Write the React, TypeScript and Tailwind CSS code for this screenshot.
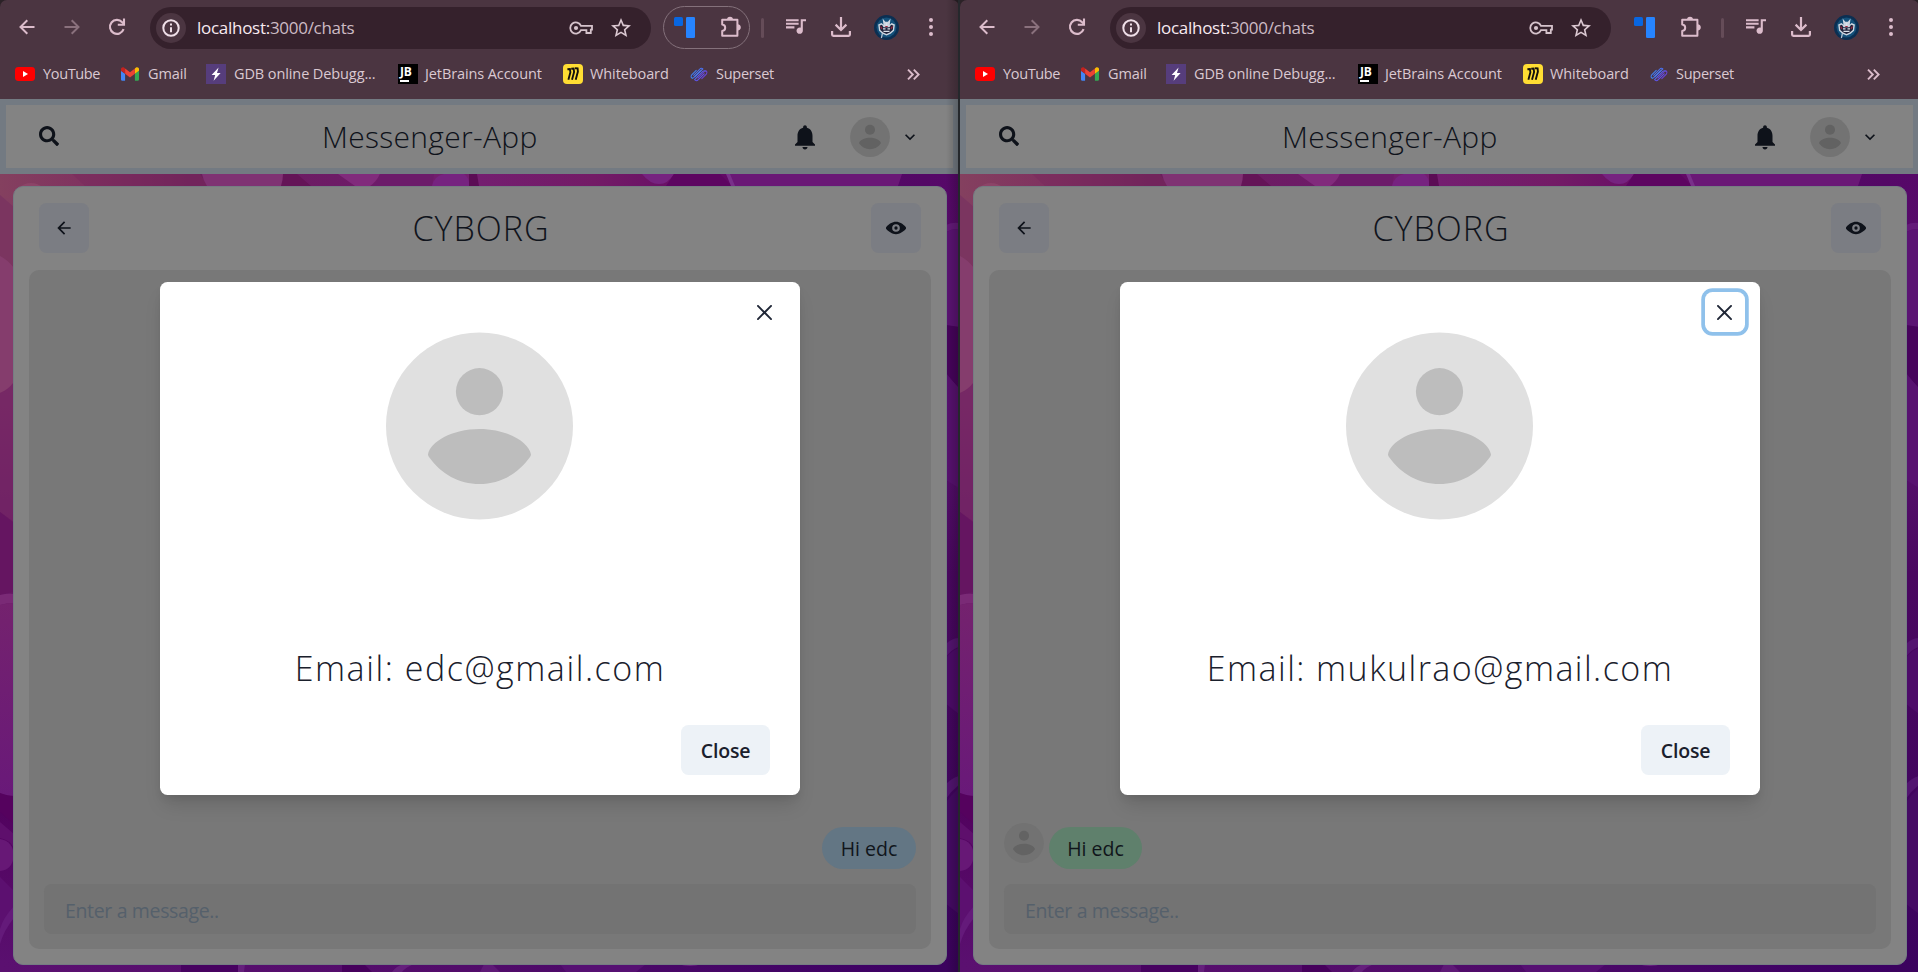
import type { ReactNode } from 'react'

const uiFont = 'font-["Open_Sans","Noto_Sans",sans-serif]'

/* ---------- Browser chrome icons ---------- */

function BackIcon({ className }: { className: string }) {
  return (
    <svg viewBox="0 0 16 16" className={className} fill="none" stroke="currentColor" strokeWidth="2">
      <path d="M15.5 8H2M8.3 1.2 1.5 8l6.8 6.8" />
    </svg>
  )
}

function ReloadIcon() {
  return (
    <svg viewBox="0 0 18 18" className="size-[18px] text-[#dcbccb]" fill="none" stroke="currentColor" strokeWidth="2.1">
      <path d="M15.6 11.2A7 7 0 1 1 14.2 4.2L16 6" />
      <path d="M16 .6v6.2H9.8" />
    </svg>
  )
}

function InfoIcon() {
  return (
    <svg viewBox="0 0 18 18" className="size-[18px] text-[#efdfe8]" fill="none" stroke="currentColor" strokeWidth="2">
      <circle cx="9" cy="9" r="7.7" />
      <path d="M9 8.2v5M9 4.6v2" />
    </svg>
  )
}

function KeyIcon() {
  return (
    <svg viewBox="0 0 24 14" className="h-[14px] w-6 text-[#d6c3cc]" fill="none" stroke="currentColor" strokeWidth="1.8">
      <path d="M12 4.800H23v3.800h-1.200v3.400h-4.400V9.200H12A5.600 5.600 0 1 1 12 4.800z" />
      <circle cx="7" cy="7" r="2.100" fill="currentColor" stroke="none" />
    </svg>
  )
}

function StarIcon() {
  return (
    <svg viewBox="2 2 20 19" className="h-[19px] w-5 text-[#dcc9d2]" fill="currentColor">
      <path d="m22 9.24-7.19-.62L12 2 9.19 8.63 2 9.24l5.46 4.73L5.82 21 12 17.27 18.18 21l-1.63-7.03L22 9.24zM12 15.4l-3.76 2.27 1-4.28-3.32-2.88 4.38-.38L12 6.1l1.71 4.04 4.38.38-3.32 2.88 1 4.28L12 15.4z" />
    </svg>
  )
}

function TabsIcon() {
  return (
    <svg viewBox="0 0 21 21" className="size-[21px]">
      <rect width="9" height="9" rx="1.5" fill="#0866e0" />
      <rect x="12" width="9" height="21" rx="1.2" fill="#2684ff" />
    </svg>
  )
}

function PuzzleIcon() {
  return (
    <svg viewBox="0 0 22 22" className="size-[22px] text-[#dcbccb]" fill="none" stroke="currentColor" strokeWidth="2" strokeLinejoin="round">
      <path d="M2.2 3.8H17.4V19.8H2.2V15c4-.4 4-6 0-6.400z" />
      <path d="M7 3.8h6A3 3 0 0 0 10 .8a3 3 0 0 0-3 3zM17.400 8.400v6A3 3 0 0 0 20.800 11.400a3 3 0 0 0-3.400-3z" fill="currentColor" stroke="none" />
    </svg>
  )
}

function QueueIcon() {
  return (
    <svg viewBox="3 6 19 14" className="h-[15px] w-5 text-[#dcbccb]" fill="currentColor">
      <path d="M15 6H3v2h12V6zm0 3.4H3v2h12v-2zM3 14.8h8v-2H3v2zM17 6v8.18c-.31-.11-.65-.18-1-.18-1.66 0-3 1.34-3 3s1.34 3 3 3 3-1.34 3-3V8h3V6h-5z" />
    </svg>
  )
}

function DownloadIcon() {
  return (
    <svg viewBox="0 0 20 20" className="size-5 text-[#dcbccb]" fill="none" stroke="currentColor" strokeWidth="2.2">
      <path d="M10 0v12.6M4.6 7.6 10 13l5.4-5.4M1.1 14v3.6q0 1.2 1.2 1.2h15.4q1.2 0 1.2-1.2V14" />
    </svg>
  )
}

function ProfileIcon() {
  return (
    <svg viewBox="0 0 25 25" className="size-[25px]">
      <circle cx="12.5" cy="12.5" r="12.5" fill="#0b2f52" />
      <circle cx="12.5" cy="12.5" r="10" fill="#135079" />
      <path d="M4.200 9.500 7.500 8l2 1.800L8.600 3.600l2.700 3.200h2.600l2.700-3.200-.9 6.200L17.600 8l3.300 1.500-.8 6.300-3.500 3-4.100 1.700-4.100-1.700-3.400-3z" fill="#cdd6e0" />
      <path d="M5.700 10.500 8 9.700l1.500 2.600h6l1.500-2.600 2.300.8-.5 4.600-3 2.500-3.300 1.300-3.300-1.300-2.900-2.500z" fill="#20243c" />
      <path d="M9 13.800h2.500M13.500 13.800H16M9.500 16.300h6M12.500 8v3.500" stroke="#dbe2ea" strokeWidth="1.2" fill="none" />
      <path d="M6.600 11.500 8 13.800M18.400 11.500 17 13.800M11.300 11.500h2.400" stroke="#a7263c" strokeWidth="1.2" />
      <path d="M8.500 18 7.400 23" stroke="#b9c6d3" strokeWidth="1.200" />
    </svg>
  )
}

function DotsIcon() {
  return (
    <svg viewBox="0 0 4 18" className="h-[18px] w-1 text-[#dcbccb]" fill="currentColor">
      <circle cx="2" cy="2" r="2" />
      <circle cx="2" cy="9" r="2" />
      <circle cx="2" cy="16" r="2" />
    </svg>
  )
}

/* ---------- Bookmark logos ---------- */

function YouTubeLogo() {
  return (
    <svg viewBox="0 0 20 14" className="h-[14px] w-5">
      <rect width="20" height="14" rx="3.4" fill="#f00" />
      <path d="M8 4v6l5-3z" fill="#fff" />
    </svg>
  )
}

function GmailLogo() {
  return (
    <svg viewBox="52 42 88 66" className="h-[14px] w-[18px]">
      <path fill="#4285f4" d="M58 108h14V74L52 59v43c0 3.32 2.69 6 6 6" />
      <path fill="#34a853" d="M120 108h14c3.32 0 6-2.69 6-6V59l-20 15" />
      <path fill="#fbbc04" d="M120 48v26l20-15v-8c0-7.42-8.47-11.65-14.4-7.2" />
      <path fill="#ea4335" d="M72 74V48l24 18 24-18v26L96 92" />
      <path fill="#c5221f" d="M52 51v8l20 15V48l-5.6-4.2c-5.94-4.45-14.4-.22-14.4 7.2" />
    </svg>
  )
}

function GdbLogo() {
  return (
    <svg viewBox="0 0 20 20" className="size-5">
      <rect width="20" height="20" fill="#563d7c" />
      <path d="M12.6 3.4 5.6 11h3.6l-1.6 5.8 7-7.8H11z" fill="#fff" />
    </svg>
  )
}

function JetBrainsLogo() {
  return (
    <span className="flex size-5 flex-col bg-black pl-[2px] text-white">
      <span className="mt-[1px] font-['Open_Sans',sans-serif] text-[12px] leading-[13px] font-bold">JB</span>
      <span className="mt-[2px] h-[1.5px] w-[9px] bg-white" />
    </span>
  )
}

function MiroLogo() {
  return (
    <svg viewBox="0 0 20 20" className="size-5">
      <rect width="20" height="20" rx="4" fill="#ffdd33" />
      <path d="M4.400 5.200 6.900 5 7.400 8.200 5.400 15.800M8.200 4.800 10.600 4.600 11.100 8 9 15.800M12 4.200 14.600 4.400 14.900 7.600 12.700 15.800" stroke="#12100c" strokeWidth="1.900" fill="none" />
    </svg>
  )
}

function SupersetLogo() {
  return (
    <svg viewBox="0 0 18 15" className="h-[15px] w-[18px]" fill="none" strokeWidth="1.050" strokeLinecap="round">
      <path d="M6.200 3.400 1.700 7.900Q.2 10 2.300 11.300L3.700 10.600 10.400 3.900" stroke="#3f7ff0" />
      <path d="M3.600 8.300 9.600 2.300Q11.400.4 12.800 1.900L4.900 9.800" stroke="#4a72f0" />
      <path d="M4.600 12.700 12.600 4.700Q14.600 3 15.800 4.200" stroke="#5763ee" />
      <path d="M14.200 6.800 8.300 12.700Q6.600 14.400 5.300 13.200" stroke="#5f55ea" />
      <path d="M11.800 11.600 16.300 7.100Q17.800 5 15.700 3.700M8 11 14.500 4.500" stroke="#6a45dd" />
    </svg>
  )
}

/* ---------- App icons ---------- */

function Person({ className, back, front }: { className: string; back: string; front: string }) {
  return (
    <svg viewBox="0 0 187 188" className={className}>
      <circle cx="93.5" cy="94" r="93.5" fill={back} />
      <circle cx="93.5" cy="59.7" r="23.6" fill={front} />
      <path d="M42 122.500C44 110 66 97 93.500 97S143 110 145 122.500Q145 123.600 144 125C132 142 114 152 93.500 152S55 142 43 125Q42 123.600 42 122.500Z" fill={front} />
    </svg>
  )
}

function CloseCross() {
  return (
    <svg viewBox="0 0 24 24" className="size-[15px] text-[#1f2636]" fill="currentColor">
      <path d="M.439,21.44a1.5,1.5,0,0,0,2.122,2.121L11.823,14.3a.25.25,0,0,1,.354,0l9.262,9.263a1.5,1.5,0,1,0,2.122-2.121L14.3,12.177a.25.25,0,0,1,0-.354l9.263-9.262A1.5,1.5,0,0,0,21.439.44L12.177,9.7a.25.25,0,0,1-.354,0L2.561.44A1.5,1.5,0,0,0,.439,2.561L9.7,11.823a.25.25,0,0,1,0,.354Z" />
    </svg>
  )
}

/* Painted wallpaper of overlapping bubbles and diagonal shades */
function Wallpaper() {
  return (
    <svg viewBox="0 0 959 798" className="absolute inset-0 h-[798px] w-[959px]" preserveAspectRatio="none">
      <defs>
        <linearGradient id="wall-left" x1="0" y1="0" x2="0" y2="1">
          <stop offset="0" stopColor="#84405f" />
          <stop offset=".12" stopColor="#803866" />
          <stop offset=".3" stopColor="#75275f" />
          <stop offset=".48" stopColor="#661862" />
          <stop offset=".6" stopColor="#6c1c6e" />
          <stop offset=".77" stopColor="#671775" />
          <stop offset=".8" stopColor="#52035f" />
          <stop offset="1" stopColor="#5a1070" />
        </linearGradient>
        <linearGradient id="wall-blob" x1="0" y1="0" x2="0" y2="1">
          <stop offset="0" stopColor="#74226e" />
          <stop offset="1" stopColor="#691979" />
        </linearGradient>
        <linearGradient id="wall-top" x1="0" y1="0" x2="1" y2="0">
          <stop offset="0" stopColor="#84405f" />
          <stop offset=".1" stopColor="#7f3060" />
          <stop offset=".2" stopColor="#6c1e5c" />
          <stop offset=".35" stopColor="#6d1b66" />
          <stop offset=".5" stopColor="#741e70" />
          <stop offset=".62" stopColor="#731b66" />
          <stop offset=".75" stopColor="#630a66" />
          <stop offset=".93" stopColor="#540866" />
          <stop offset="1" stopColor="#520864" />
        </linearGradient>
        <linearGradient id="wall-right" x1="0" y1="0" x2="0" y2="1">
          <stop offset="0" stopColor="#560868" />
          <stop offset=".3" stopColor="#5a1270" />
          <stop offset=".5" stopColor="#4a0760" />
          <stop offset="1" stopColor="#3b025e" />
        </linearGradient>
        <linearGradient id="wall-bottom" x1="0" y1="0" x2="1" y2="0">
          <stop offset="0" stopColor="#5b1070" />
          <stop offset=".5" stopColor="#520c6a" />
          <stop offset="1" stopColor="#3c0063" />
        </linearGradient>
      </defs>
      <rect width="959" height="798" fill="url(#wall-left)" />
      <rect width="959" height="24" fill="url(#wall-top)" />
      <rect x="930" width="29" height="798" fill="url(#wall-right)" />
      <rect y="786" width="930" height="12" fill="url(#wall-bottom)" />

      {/* top edge */}
      <circle cx="31" cy="26" r="17" fill="#8c4468" />
      <path d="M72 0h128l8 12H85z" fill="#782a5c" opacity=".5" />
      <path d="M202 0h81v12h-76q-4-6-5-12z" fill="#7f3273" />
      <path d="M283 0h14l14 12h-30q2-6 2-12z" fill="#641457" />
      <path d="M338 0h42q-4 8-10 12h-15z" fill="#812b7c" />
      <path d="M380 0h54l-2 12h-60q6-4 8-12z" fill="#6c1b6a" />
      <path d="M432 12q2-10 12-12h20q6 4 5 12z" fill="#762380" />
      <path d="M469 0h8l2 12h-10z" fill="#5b0c55" />
      <path d="M642 0h32q-6 10-15 10T642 0z" fill="#762380" />
      <path d="M674 0h46l12 12h-66z" fill="#5d0561" />
      <path d="M728 0h174l-4 12H733z" fill="#6a1876" />
      <path d="M726 0h4l5 12h-4z" fill="#79308a" />

      {/* left edge */}
      <path d="M0 21 14 33v61L0 82z" fill="#7b3560" />
      <path d="M0 82q8 4 14 12v114Q8 216 0 219z" fill="#853d6d" />
      <path d="M0 219q8-3 14-11v140L0 338z" fill="#77286a" opacity=".55" />
      <path d="M0 338 14 349v69q-8 1-14 3z" fill="#651561" />
      <path d="M0 421q8-2 14-1v9q-8 0-14 2z" fill="#7a2a76" />
      <path d="M0 431q8-2 14-2v193q-8 0-14-3z" fill="url(#wall-blob)" />
      <path d="M0 619q8 3 14 3v28L0 638z" fill="#55025e" />
      <path d="M0 648 14 660v14q-4-8-14-10z" fill="#5e0f6c" />
      <path d="M0 665q13 2 14 17-2 14-14 15z" fill="#671876" />
      <path d="M0 703 14 717v20q-8 8-14 30z" fill="#5c1070" />
      <path d="M14 732Q3 744 0 755v15q4-14 14-26z" fill="#641a7a" />

      {/* right edge */}
      <path d="M946 51q6-3 13-2v6q-7 0-13 3z" fill="#641a79" />
      <path d="M946 58q6-3 13-3v98q-8 0-13-2z" fill="#5b1373" />
      <path d="M946 151l13 2v62l-13-16z" fill="#47035c" />
      <path d="M946 200l13 14v100l-13-8z" fill="#581170" />
      <path d="M946 470q6-6 13-6v9q-7 2-13 10z" fill="#541470" />
      <path d="M946 484q6-8 13-10v66l-13-10z" fill="#4d0b69" />
      <path d="M946 610q6-6 13-8v9q-8 6-13 14z" fill="#521470" />
      <path d="M946 628q6-8 13-14v126l-13-10z" fill="#450a64" />

      {/* bottom edge */}
      <path d="M181 790h57l4 8h-61z" fill="#470260" />
      <path d="M238 790h7l-1 8h-6z" fill="#65207c" />
      <path d="M342 790h22l8 8h-30z" fill="#46005c" />
      <path d="M404 790h10q-8 3-12 8h-10q4-6 12-8z" fill="#65207c" />
      <path d="M484 790h8l8 8h-20z" fill="#5e1976" />
      <path d="M560 790h86l-10 8h-70z" fill="#561072" />
      <path d="M678 790h24q-12 4-24 0z" fill="#6a2280" />
    </svg>
  )
}

/* ---------- Browser window ---------- */

function Slot({ className, children }: { className: string; children: ReactNode }) {
  return <div className={`flex h-[42px] shrink-0 items-center justify-center pb-px ${className}`}>{children}</div>
}

function Bookmark({ logo, label, className }: { logo: ReactNode; label: string; className: string }) {
  return (
    <div className={`flex shrink-0 items-center ${className}`}>
      {logo}
      <span className="-mt-px whitespace-nowrap">{label}</span>
    </div>
  )
}

function BrowserBar({ outlined }: { outlined: boolean }) {
  return (
    <div className="h-[99px] rounded-t-[7px] bg-[#4b3541]">
      <div className="flex items-center pt-[6px] pl-[4.5px]">
        <Slot className="w-[45px]"><BackIcon className="size-4 text-[#dcbccb]" /></Slot>
        <Slot className="w-[45px]"><BackIcon className="size-4 rotate-180 text-[#8a717d]" /></Slot>
        <Slot className="w-[45px]"><ReloadIcon /></Slot>
        <div className="ml-[10.5px] flex h-[42px] w-[501px] shrink-0 items-center rounded-full bg-[#35212c] pl-[6px]">
          <div className="flex size-[30px] items-center justify-center rounded-full bg-[#4b3541]"><InfoIcon /></div>
          <div className="ml-[11px] text-[17px] leading-6 tracking-[-0.28px] text-[#cdbbc4]">
            <span className="text-[#f8eaf1]">localhost:</span>3000/chats
          </div>
          <div className="mt-px ml-auto"><KeyIcon /></div>
          <div className="mr-[20px] ml-[18px]"><StarIcon /></div>
        </div>
        <div className={`ml-3 flex h-[43px] w-[87px] shrink-0 items-center rounded-full border ${outlined ? 'border-[#84717b]' : 'border-transparent'}`}>
          <div className="ml-[10px]"><TabsIcon /></div>
          <div className="-mt-0.5 ml-[25px]"><PuzzleIcon /></div>
        </div>
        <div className="ml-[11px] h-5 w-[3px] rounded-full bg-[#654c58]" />
        <Slot className="ml-[9.5px] w-[45px]"><span className="-mt-px"><QueueIcon /></span></Slot>
        <Slot className="w-[45px]"><DownloadIcon /></Slot>
        <Slot className="w-[45px]"><ProfileIcon /></Slot>
        <Slot className="w-[44px]"><DotsIcon /></Slot>
      </div>
      <div className="mt-[15px] flex h-5 items-center pl-[15px] text-[14.5px] leading-5 tracking-[-0.1px] text-[#dac9d2]">
        <Bookmark className="w-[106px] gap-2 tracking-[-0.35px]" logo={<YouTubeLogo />} label="YouTube" />
        <Bookmark className="w-[85px] gap-[9px]" logo={<GmailLogo />} label="Gmail" />
        <Bookmark className="w-[192px] gap-2" logo={<GdbLogo />} label="GDB online Debugg..." />
        <Bookmark className="w-[165px] gap-[7px]" logo={<JetBrainsLogo />} label="JetBrains Account" />
        <Bookmark className="w-[127px] gap-[7px]" logo={<MiroLogo />} label="Whiteboard" />
        <Bookmark className="w-[217px] gap-2 tracking-[-0.25px]" logo={<SupersetLogo />} label="Superset" />
        <svg viewBox="0 0 13 11" className="h-[11px] w-[13px] text-[#dcbccb]" fill="none" stroke="currentColor" strokeWidth="1.9">
          <path d="m1 .7 4.800 4.800L1 10.300M6.800.7l4.800 4.800-4.800 4.800" />
        </svg>
      </div>
    </div>
  )
}

function AppHeader() {
  return (
    <header className="flex h-[75px] items-center border-6 border-[#737a82] bg-[#838383] text-[#0e121a]">
      <svg viewBox="0 0 512 512" className="-mt-[2px] ml-[33px] size-5 shrink-0" fill="currentColor">
        <path d="M505 442.700L405.300 343c-4.500-4.500-10.600-7-17-7H372c27.600-35.300 44-79.700 44-128C416 93.100 322.900 0 208 0S0 93.100 0 208s93.100 208 208 208c48.300 0 92.700-16.400 128-44v16.300c0 6.400 2.500 12.500 7 17l99.700 99.700c9.400 9.400 24.600 9.400 33.900 0l28.300-28.300c9.400-9.400 9.400-24.600.1-34zM208 336c-70.700 0-128-57.200-128-128 0-70.700 57.200-128 128-128 70.700 0 128 57.200 128 128 0 70.700-57.200 128-128 128z" />
      </svg>
      <h1 className="ml-[263px] w-[428px] shrink-0 text-[30px] leading-[45px] font-light tracking-[0.3px] whitespace-nowrap">Messenger-App</h1>
      <svg viewBox="0 0 24 24" className="ml-[40px] size-[30px] shrink-0" fill="currentColor">
        <path d="M12 22c1.100 0 2-.9 2-2h-4c0 1.100.89 2 2 2zm6-6v-5c0-3.070-1.640-5.640-4.500-6.320V4c0-.83-.67-1.500-1.500-1.500s-1.500.67-1.500 1.500v.68C7.630 5.360 6 7.920 6 11v5l-2 2v1h16v-1l-2-2z" />
      </svg>
      <Person className="ml-[30px] h-10 w-10 shrink-0" back="#737373" front="#626262" />
      <svg viewBox="0 0 24 24" className="ml-[10px] size-5 shrink-0" fill="currentColor">
        <path d="M16.590 8.590L12 13.170 7.410 8.590 6 10l6 6 6-6z" />
      </svg>
    </header>
  )
}

function SquareButton({ children }: { children: ReactNode }) {
  return <button className="flex size-[50px] items-center justify-center rounded-[7.5px] bg-[#7b7d83] text-[#0e121a]">{children}</button>
}

function ChatCard({ message }: { message: ReactNode }) {
  return (
    <main className="relative mt-3 ml-[13px] flex h-[779px] w-[934px] flex-col rounded-[10px] border border-[#757c83] bg-[#838383] px-[15px] pt-[16px] pb-[15px]">
      <div className="flex h-[50px] items-center justify-between px-[10px]">
        <SquareButton>
          <svg viewBox="0 0 24 24" className="size-5" fill="currentColor">
            <path d="M20 11H7.830l5.590-5.590L12 4l-8 8 8 8 1.410-1.410L7.830 13H20v-2z" />
          </svg>
        </SquareButton>
        <h2 className="pl-[2px] text-[34px] leading-[50px] font-light tracking-[1px] text-[#10141c]">CYBORG</h2>
        <SquareButton>
          <svg viewBox="0 0 24 24" className="size-5" fill="currentColor">
            <path d="M23.432,10.524C20.787,7.614,16.400,4.538,12,4.600,7.600,4.537,3.213,7.615.568,10.524a2.211,2.211,0,0,0,0,2.948C3.182,16.351,7.507,19.400,11.839,19.400h.308c4.347,0,8.671-3.049,11.288-5.929A2.210,2.210,0,0,0,23.432,10.524ZM7.400,12A4.600,4.600,0,1,1,12,16.600,4.600,4.600,0,0,1,7.400,12Z" />
            <circle cx="12" cy="12" r="2" />
          </svg>
        </SquareButton>
      </div>
      <section className="mt-[17px] flex flex-1 flex-col justify-end rounded-[10px] bg-[#787878] p-[15px]">
        {message}
        <div className="flex h-[50px] items-center rounded-[7.5px] bg-[#737373] pt-[3px] pl-[21px] text-[19.5px] leading-7 tracking-[-0.35px] text-[#55606b]">
          Enter a message..
        </div>
      </section>
    </main>
  )
}

function ProfileModal({ email, focused }: { email: ReactNode; focused: boolean }) {
  return (
    <div className="absolute top-[282px] left-[160px] flex h-[513px] w-[640px] flex-col items-center rounded-[7.5px] bg-white pt-[50px] shadow-[0_13px_19px_-4px_rgba(0,0,0,0.13),0_5px_8px_-2px_rgba(0,0,0,0.07)]">
      <button
        className={`absolute top-[10px] right-[15px] flex size-10 items-center justify-center rounded-[7.5px] pr-px ${focused ? 'shadow-[0_0_0_3.75px_#8fc1eb]' : ''}`}
      >
        <CloseCross />
      </button>
      <Person className="mr-[1px] h-[188px] w-[187px]" back="#e0e0e0" front="#bdbdbd" />
      <p className="mt-[126px] text-[34px] leading-[45px] font-light whitespace-nowrap text-[#1a202c]">{email}</p>
      <button className="mt-[34px] mr-[30px] h-[50px] w-[89px] self-end rounded-[7.5px] bg-[#edf2f7] pt-px text-[19.5px] leading-[50px] font-semibold tracking-[-0.2px] text-[#1a202c]">
        Close
      </button>
    </div>
  )
}

function BrowserWindow({ outlined, focused, email, message, shaded }: { outlined: boolean; focused: boolean; email: ReactNode; message: ReactNode; shaded: boolean }) {
  return (
    <div className="relative h-[972px] w-[958px] shrink-0 overflow-hidden bg-[#2b2227]">
      <div className="w-[959px]">
        <BrowserBar outlined={outlined} />
        <AppHeader />
        <div className="relative flex h-[798px] flex-col">
          <Wallpaper />
          <ChatCard message={message} />
        </div>
      </div>
      <ProfileModal email={email} focused={focused} />
      {shaded && <div className="absolute top-0 right-0 h-full w-3 bg-linear-to-r from-transparent to-black/20" />}
    </div>
  )
}

export default function App() {
  return (
    <div className={`flex h-[972px] w-[1918px] overflow-hidden bg-[#25282c] ${uiFont}`}>
      <BrowserWindow
        outlined
        focused={false}
        shaded
        email={<span className="tracking-[1.550px]">Email: edc@gmail.com</span>}
        message={
          <div className="mb-[15px] h-[42px] w-[94px] self-end rounded-[21px] bg-[#637684] pt-px text-center text-[19.5px] leading-[42px] text-[#10151b]">Hi edc</div>
        }
      />
      <div className="h-full w-[2px] shrink-0 bg-[#25282c]" />
      <BrowserWindow
        outlined={false}
        focused
        shaded={false}
        email={<span className="tracking-[1.450px]">Email: mukulrao@gmail.com</span>}
        message={
          <div className="mb-[15px] flex items-end">
            <Person className="mb-[6px] h-10 w-10" back="#727272" front="#636363" />
            <div className="ml-[5px] h-[42px] w-[93px] rounded-[21px] bg-[#5f806c] pt-px text-center text-[19.5px] leading-[42px] text-[#10151b]">Hi edc</div>
          </div>
        }
      />
    </div>
  )
}
